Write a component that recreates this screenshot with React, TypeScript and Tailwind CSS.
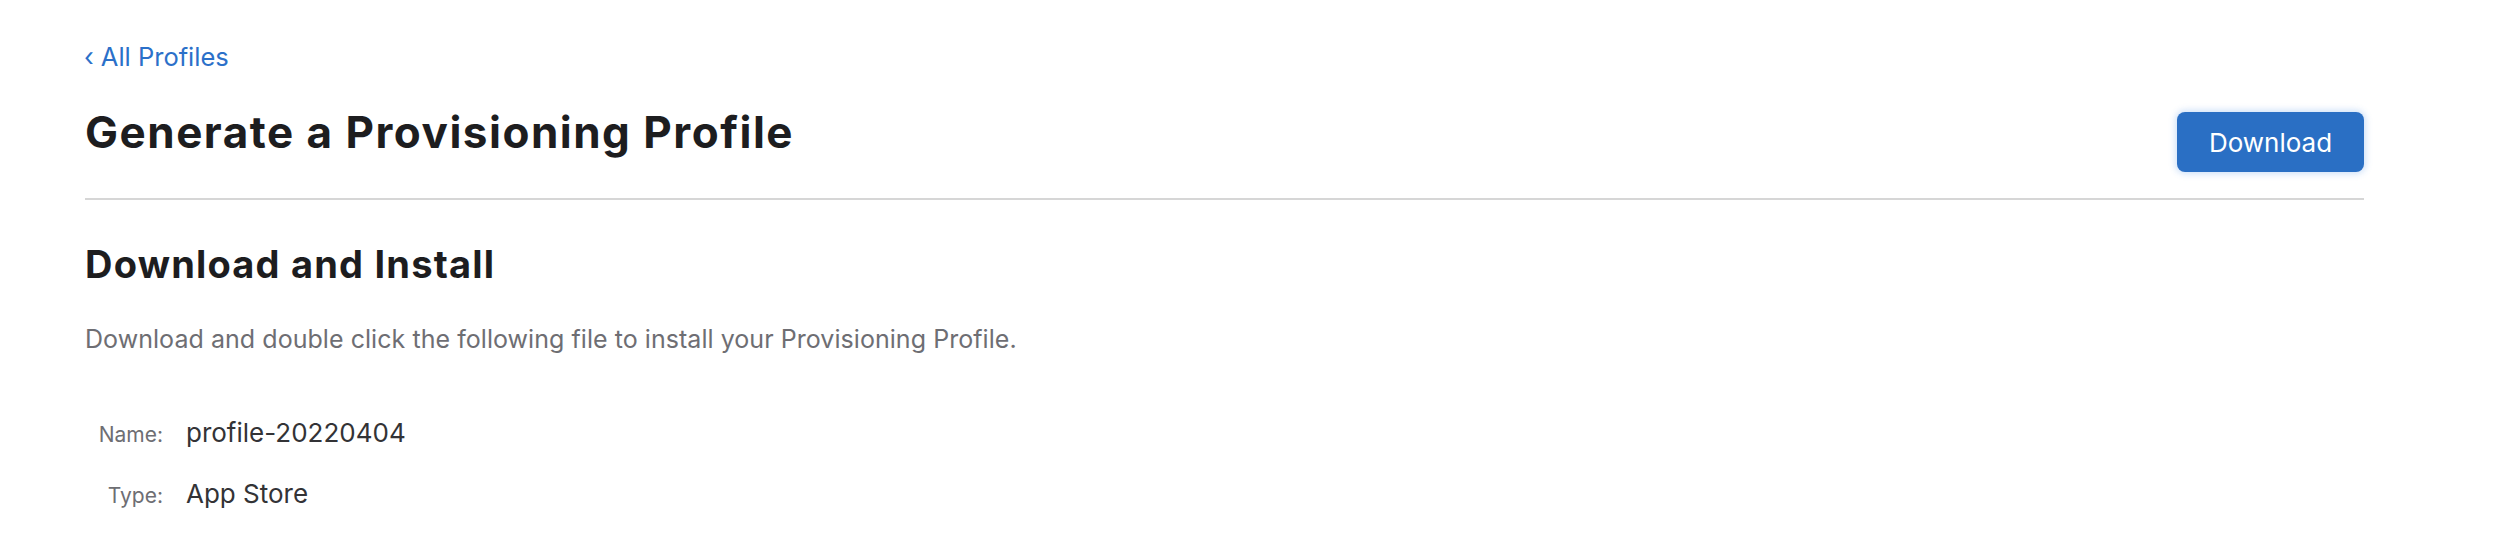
const rows = [
  { label: "Name:", value: "profile-20220404" },
  { label: "Type:", value: "App Store" },
];

const App = () => {
  return (
    <div className="min-h-[534px] w-full bg-white font-['Inter',sans-serif] antialiased">
      <div className="w-[2279px] pl-[85px] box-content pt-[41px]">
        <a href="#" className="flex items-center gap-[7px] h-[32px] text-[25.5px] leading-[32px] text-[#2b70c9]">
          <span className="-ml-[1px]">‹</span>
          <span>All Profiles</span>
        </a>

        <div className="mt-[33px] flex items-start justify-between">
          <h1 className="text-[44px] leading-[52px] font-bold tracking-[1.5px] text-[#1d1d1f]">
            Generate a Provisioning Profile
          </h1>
          <button className="mt-[6px] h-[60px] w-[187px] rounded-[8px] bg-[#2a6fc4] text-[26px] text-white shadow-[0_0_6px_2px_rgba(66,140,230,0.25)]">
            Download
          </button>
        </div>

        <div className="mt-[26px] h-[2px] bg-[#d6d6d6]" />

        <h2 className="mt-[41px] text-[38px] leading-[46px] font-bold tracking-[1.2px] text-[#1d1d1f]">
          Download and Install
        </h2>
        <p className="mt-[37px] text-[25px] leading-[30px] tracking-[0.05px] text-[#6e6e73]">
          Download and double click the following file to install your Provisioning Profile.
        </p>

        <div className="mt-[63px] flex flex-col gap-[27px]">
          {rows.map((r) => (
            <div key={r.label} className="flex items-baseline">
              <span className="w-[78px] text-right text-[21px] text-[#6e6e73]">{r.label}</span>
              <span className="ml-[23px] text-[26px] leading-[32px] text-[#333336]">{r.value}</span>
            </div>
          ))}
        </div>
      </div>
    </div>
  );
};

export default App;
